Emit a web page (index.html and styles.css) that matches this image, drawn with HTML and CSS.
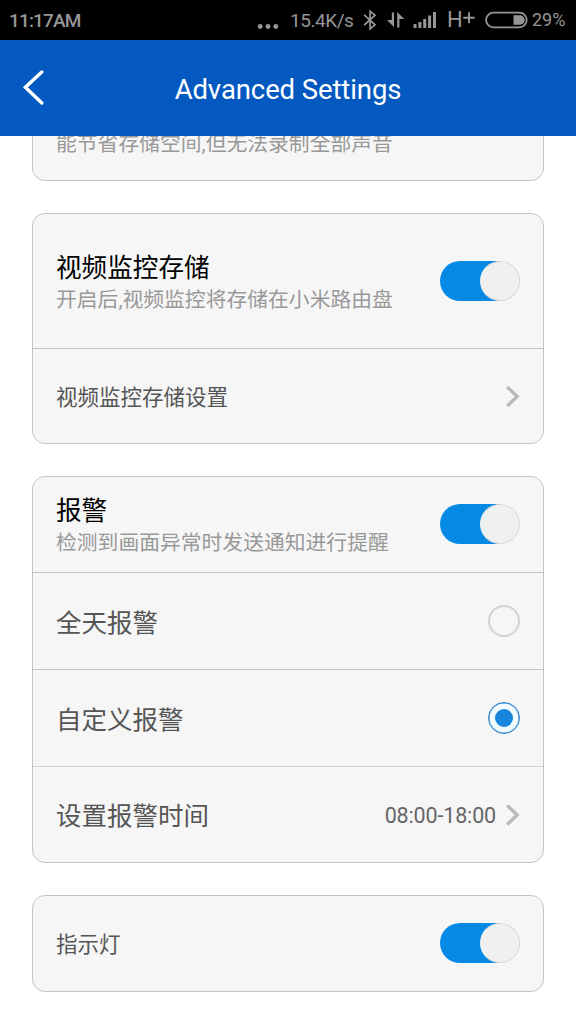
FILE: index.html
```html
<!DOCTYPE html>
<html lang="zh-CN">
<head>
<meta charset="utf-8">
<title>Advanced Settings</title>
<link rel="stylesheet" href="styles.css">
</head>
<body>
<div class="status">
  <span class="clock">11:17AM</span>
  <svg class="dots" width="22" height="40" viewBox="0 0 22 40"><circle cx="3.2" cy="26.5" r="2.4"/><circle cx="11" cy="26.5" r="2.4"/><circle cx="18.8" cy="26.5" r="2.4"/></svg>
  <span class="speed">15.4K/s</span>
  <svg class="bluetooth" width="14" height="40" viewBox="0 0 14 40"><path d="M1.2 14.8 12 24.8 7.1 29V11.2L12 15.3 1.2 25"/></svg>
  <svg class="arrows" width="18" height="40" viewBox="0 0 18 40"><path d="M4.8 12.5H7V27L0 20H4.8ZM10.2 12 17.2 19H12.4V27.5H10.2Z"/></svg>
  <svg class="signal" width="24" height="40" viewBox="0 0 24 40"><path d="M.5 24H3.5V28H.5ZM5.4 22H8.4V28H5.4ZM10.2 19H13.2V28H10.2ZM15.1 15.5H18.1V28H15.1ZM20 12H23V28H20Z"/></svg>
  <span class="network">H<svg width="12" height="12" viewBox="0 0 12 12"><path d="M6 .3V11.3M.3 5.8H11.7"/></svg></span>
  <svg class="battery" width="43" height="40" viewBox="0 0 43 40"><rect class="battery-shell" x="1.1" y="12.7" width="40.6" height="14.6" rx="7.3"/><path class="battery-level" d="M28.5 15.3H35A4.7 4.7 0 0 1 35 24.7H28.5Z"/></svg>
  <span class="percent">29%</span>
</div>
<header class="header">
  <svg class="back" width="22" height="36" viewBox="0 0 22 36"><path d="M19.8 2 3.4 17.3 19.8 33"/></svg>
  <h1 class="heading">Advanced Settings</h1>
  <span class="header-end"></span>
</header>
<main class="content">
  <section class="card card-scrolled">
    <div class="row"><p class="note">能节省存储空间,但无法录制全部声音</p></div>
  </section>
  <section class="card">
    <div class="row row-tall">
      <div class="text"><h2 class="title">视频监控存储</h2><p class="note">开启后,视频监控将存储在小米路由盘</p></div>
      <span class="switch"></span>
    </div>
    <div class="row row-link">
      <span class="label">视频监控存储设置</span>
      <svg class="chevron" width="16" height="24" viewBox="0 0 16 24"><path d="M3.2 3 13.2 12.5 3.2 22"/></svg>
    </div>
  </section>
  <section class="card">
    <div class="row row-alarm">
      <div class="text"><h2 class="title">报警</h2><p class="note">检测到画面异常时发送通知进行提醒</p></div>
      <span class="switch"></span>
    </div>
    <div class="row"><span class="option">全天报警</span><span class="radio"></span></div>
    <div class="row"><span class="option">自定义报警</span><span class="radio radio-on"></span></div>
    <div class="row row-soft">
      <span class="option">设置报警时间</span>
      <span class="time">08:00-18:00</span>
      <svg class="chevron" width="16" height="24" viewBox="0 0 16 24"><path d="M3.2 2.5 13.2 12 3.2 21.5"/></svg>
    </div>
  </section>
  <section class="card">
    <div class="row row-single"><span class="label">指示灯</span><span class="switch"></span></div>
  </section>
</main>
</body>
</html>
```
FILE: styles.css
```css
*, *::before, *::after { box-sizing: border-box; }
body {
  margin: 0;
  width: 576px;
  height: 1024px;
  overflow: hidden;
  display: flex;
  flex-direction: column;
  background: #fff;
  font-family: Roboto, "Noto Sans CJK SC", sans-serif;
}
h1, h2, p { margin: 0; font-weight: 400; }
svg { display: block; flex: none; }

.status {
  height: 40px;
  flex: none;
  display: flex;
  align-items: center;
  padding-left: 9px;
  background: #000;
  color: #969696;
  fill: #969696;
  font-size: 19px;
  line-height: 40px;
  white-space: nowrap;
}
.clock, .speed { padding-top: 2px; }
.clock { width: 248px; font-weight: 500; letter-spacing: -0.85px; }
.dots { margin-right: 11px; }
.speed { width: 73px; letter-spacing: -0.45px; }
.bluetooth { fill: none; stroke: #969696; stroke-width: 1.7; margin-right: 10px; }
.arrows { margin-right: 8px; }
.signal { margin-right: 10px; }
.network { display: flex; width: 38px; font-size: 22px; }
.network svg { margin: 12px 0 0; stroke: #969696; stroke-width: 1.9; }
.battery { margin-right: 4px; }
.battery-shell { fill: none; stroke: #969696; stroke-width: 1.8; }
.percent { font-size: 18px; }

.header {
  height: 96px;
  flex: none;
  display: flex;
  align-items: center;
  padding: 0 22px;
  background: #0459c1;
  color: #fff;
}
.back { fill: none; stroke: #fff; stroke-width: 3.4; stroke-linecap: round; }
.heading {
  flex: 1;
  padding-top: 3px;
  text-align: center;
  font-size: 27.5px;
  line-height: 40px;
  letter-spacing: -0.1px;
}
.header-end { width: 22px; }

.content {
  flex: 1;
  min-height: 0;
  overflow: hidden;
  display: flex;
  flex-direction: column;
  gap: 32px;
  padding: 0 32px;
}
.card {
  flex: none;
  border: 1px solid #c4c4c4;
  border-radius: 13px;
  background: #f6f6f6;
}
.card-scrolled { margin-top: -52px; }
.row {
  height: 97px;
  display: flex;
  align-items: center;
  padding: 0 23px;
}
.card-scrolled .row { height: 95px; align-items: flex-start; padding-top: 44px; }
.row + .row { border-top: 1px solid #c2c2c2; }
.row + .row-soft { height: 96px; border-top-color: #d2d2d2; }
.row-tall { height: 134px; }
.row + .row-link { height: 95px; }
.row-alarm, .row-single { height: 95px; padding-bottom: 1px; }
.row > :first-child { flex: 1; }
.text { padding-top: 3px; }
.title { font-size: 25.6px; line-height: 34px; color: #000; }
.note { font-size: 20.8px; line-height: 30px; color: #999; white-space: nowrap; }
.label { padding-bottom: 2px; font-size: 21.5px; color: #555; }
.option { padding-bottom: 2px; font-size: 25.5px; color: #555; }
.time { padding-top: 1px; font-size: 21.5px; letter-spacing: -0.15px; color: #666; margin-right: 8px; }
.chevron { fill: none; stroke: #b9b9b9; stroke-width: 3.3; }

.switch {
  width: 80px;
  height: 40px;
  border-radius: 20px;
  background: linear-gradient(to right, #0489e5 75%, #f0f0f0 75%);
  display: flex;
  justify-content: flex-end;
}
.switch::after {
  content: "";
  width: 40px;
  height: 40px;
  border: 1px solid #dadada;
  border-left-color: #f0f0f0;
  border-radius: 50%;
  background: #f0f0f0;
}
.radio {
  width: 32px;
  height: 32px;
  border: 2px solid #d3d3d3;
  border-radius: 50%;
  display: flex;
  align-items: center;
  justify-content: center;
}
.radio-on { border: 1px solid #2b82c9; background: #f2fbff; box-shadow: inset 0 0 0 0.5px #2b82c9; }
.radio-on::after {
  content: "";
  width: 18px;
  height: 18px;
  border-radius: 50%;
  background: #1a85dc;
}
```
